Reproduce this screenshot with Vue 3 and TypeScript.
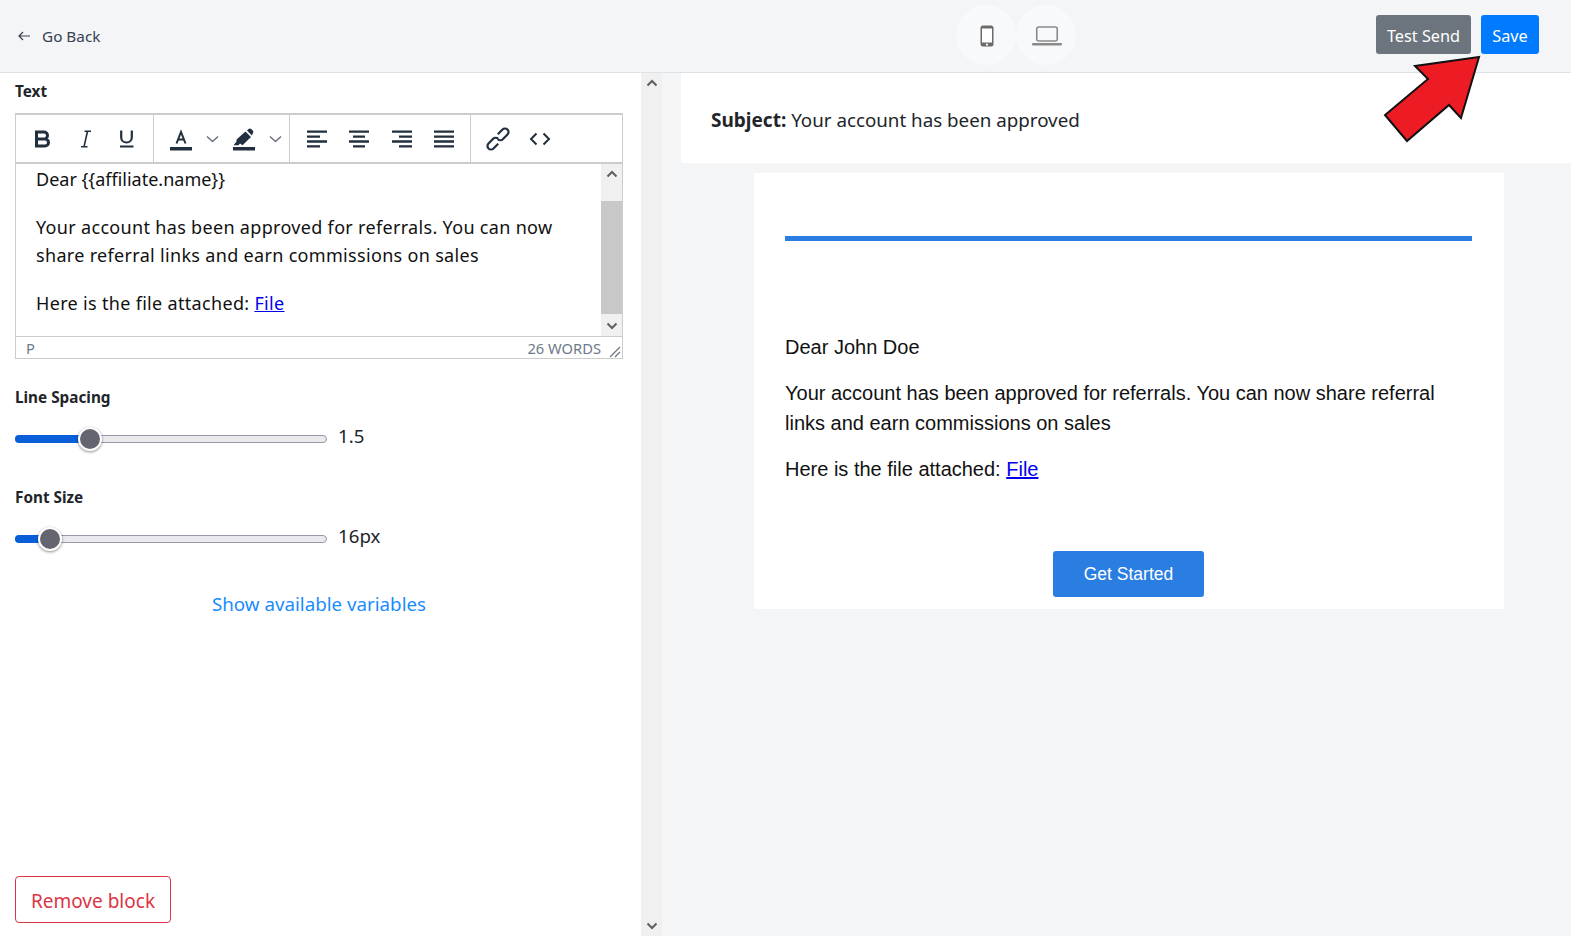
<script setup lang="ts">
const blockLabel = 'Text'
</script>

<template>
  <div class="page">
    <header class="topbar">
      <a class="back">
        <svg class="back-icon" viewBox="0 0 16 16" width="16" height="16"><path d="M14 8H3M7 4 3 8l4 4" fill="none" stroke="#374151" stroke-width="1.2" /></svg>
        <span>Go Back</span>
      </a>
      <div class="devices">
        <button class="device">
          <svg width="14" height="22" viewBox="0 0 14 22"><rect x="0.5" y="0.5" width="13" height="21" rx="2.5" fill="#6b6b6b" /><rect x="2" y="3.5" width="10" height="14" fill="#fff" /><circle cx="7" cy="19.6" r="1.1" fill="#fff" /></svg>
        </button>
        <button class="device">
          <svg width="30" height="20" viewBox="0 0 30 20"><rect x="4.75" y="1" width="20.5" height="14" rx="2" fill="none" stroke="#8a8a8a" stroke-width="1.6" /><rect x="0" y="17" width="30" height="2.6" rx="1" fill="#8a8a8a" /></svg>
        </button>
      </div>
      <div class="actions">
        <button class="btn grey">Test Send</button>
        <button class="btn blue">Save</button>
      </div>
      <svg class="arrow" width="104" height="94" viewBox="0 0 104 94"><path d="M99 5 35 14 48 27 5 63 27 89 69 53 81 66Z" fill="#ed1c24" stroke="#111" stroke-width="2" /></svg>
    </header>

    <div class="body">
      <aside class="panel">
        <div class="panel-inner">
          <div class="label first">{{ blockLabel }}</div>
          <div class="editor">
            <div class="toolbar">
              <div class="group g1">
                <svg class="ti" viewBox="0 0 24 24"><path d="M5.500 5H13a3.500 3.500 0 0 1 0 7H5.500zM5.500 12H14a3.500 3.500 0 0 1 0 7H5.500z" fill="none" stroke="#222f3e" stroke-width="3" /></svg>
                <svg class="ti" viewBox="0 0 24 24"><path d="M11.500 4.300H18M8 19.700h6.500M14.500 4.300 11 19.700" fill="none" stroke="#222f3e" stroke-width="1.600" /></svg>
                <svg class="ti" viewBox="0 0 24 24"><path d="M6.200 3.500v7a5.300 5 0 0 0 10.600 0v-7M5 19.500h13.500" fill="none" stroke="#222f3e" stroke-width="2.200" /></svg>
              </div>
              <div class="group g2">
                <svg class="ti" viewBox="0 0 24 24"><path d="M7.500 16.500 12 5l4.500 11.500M9 12.500h6" fill="none" stroke="#222f3e" stroke-width="2" /><rect x="1" y="20" width="22" height="3.500" fill="#222f3e" /></svg>
                <svg class="chev" viewBox="0 0 13 8"><path d="M1 1.500 6.500 6.500 12 1.500" fill="none" stroke="#6b7280" stroke-width="1.500" /></svg>
                <svg class="ti" viewBox="0 0 24 24"><path d="M1.500 18.200 4.500 14.500V12.500L13.500 4.500 19 10 10.500 18.200 8 16.500 6.500 18.200ZM15 3.500 17 1.800Q18.200 1.200 19.200 2L21 3.800Q21.700 5 21 6L19.800 8.500Z" fill="#222f3e" /><rect x="1" y="20" width="22" height="3.500" fill="#222f3e" /></svg>
                <svg class="chev" viewBox="0 0 13 8"><path d="M1 1.500 6.500 6.500 12 1.500" fill="none" stroke="#6b7280" stroke-width="1.500" /></svg>
              </div>
              <div class="group g3">
                <svg class="ti" viewBox="0 0 24 24"><path d="M2 4.700h20M2 9.600h13M2 14.500h20M2 19.400h13" stroke="#222f3e" stroke-width="2.300" /></svg>
                <svg class="ti" viewBox="0 0 24 24"><path d="M2 4.700h20M6 9.600h12M2 14.500h20M6 19.400h12" stroke="#222f3e" stroke-width="2.300" /></svg>
                <svg class="ti" viewBox="0 0 24 24"><path d="M2 4.700h20M9 9.600h13M2 14.500h20M9 19.400h13" stroke="#222f3e" stroke-width="2.300" /></svg>
                <svg class="ti" viewBox="0 0 24 24"><path d="M2 4.700h20M2 9.600h20M2 14.500h20M2 19.400h20" stroke="#222f3e" stroke-width="2.300" /></svg>
              </div>
              <div class="group g4">
                <svg class="ti" viewBox="0 0 24 24"><g transform="rotate(-45 12 12) scale(1.100) translate(-1.100 -1.100)"><path d="M15 8.800h6a3.200 3.200 0 0 1 0 6.400h-6a3.200 3.200 0 0 1-3.200-3.200M9 15.200H3a3.200 3.200 0 0 1 0-6.400h6a3.200 3.200 0 0 1 3.200 3.200" fill="none" stroke="#222f3e" stroke-width="2" /></g></svg>
                <svg class="ti" viewBox="0 0 24 24"><path d="M8.500 6.500 3 12l5.500 5.500M15.500 6.500 21 12l-5.500 5.500" fill="none" stroke="#222f3e" stroke-width="2" /></svg>
              </div>
            </div>
            <div class="content">
              <div class="text">
                <p class="clip">Dear &#123;&#123;affiliate.name&#125;&#125;</p>
                <p>Your account has been approved for referrals. You can now share referral links and earn commissions on sales</p>
                <p>Here is the file attached: <a class="flink">File</a></p>
              </div>
              <div class="scroll">
                <svg class="sb-arrow" viewBox="0 0 12 8"><path d="M1.500 6.500 6 2l4.500 4.500" fill="none" stroke="#5f5f5f" stroke-width="2" /></svg>
                <div class="thumb"></div>
                <svg class="sb-arrow" viewBox="0 0 12 8"><path d="M1.500 1.500 6 6l4.500-4.500" fill="none" stroke="#5f5f5f" stroke-width="2" /></svg>
              </div>
            </div>
            <div class="status">
              <span>P</span>
              <span class="words">26 WORDS</span>
              <svg class="grip" width="12" height="12" viewBox="0 0 12 12"><path d="M1 11 11 1M6 11l5-5" stroke="#6b7280" stroke-width="1.200" /></svg>
            </div>
          </div>

          <div class="label spacing">Line Spacing</div>
          <div class="slider-row">
            <div class="track"><div class="fill" style="width: 72px"></div><div class="knob" style="left: 62px"></div></div>
            <span class="val">1.5</span>
          </div>
          <div class="label fontsize">Font Size</div>
          <div class="slider-row">
            <div class="track"><div class="fill" style="width: 30px"></div><div class="knob" style="left: 22px"></div></div>
            <span class="val">16px</span>
          </div>
          <a class="vars">Show available variables</a>
          <div class="grow"></div>
          <button class="remove">Remove block</button>
        </div>
      </aside>
      <div class="pane-scroll">
        <svg class="sb-arrow" viewBox="0 0 12 8"><path d="M1.500 6.500 6 2l4.500 4.500" fill="none" stroke="#5f5f5f" stroke-width="2" /></svg>
        <svg class="sb-arrow" viewBox="0 0 12 8"><path d="M1.500 1.500 6 6l4.500-4.500" fill="none" stroke="#5f5f5f" stroke-width="2" /></svg>
      </div>
      <main class="preview">
        <div class="subject"><b>Subject:</b> <span class="subject-text">Your account has been approved</span></div>
        <div class="mail">
          <div class="rule"></div>
          <p>Dear John Doe</p>
          <p>Your account has been approved for referrals. You can now share referral links and earn commissions on sales</p>
          <p>Here is the file attached: <a class="flink">File</a></p>
          <div class="cta"><button>Get Started</button></div>
        </div>
      </main>
    </div>
  </div>
</template>

<style>
html, body { margin: 0; padding: 0; background: #f4f5f7; }
</style>

<style scoped>
.page { width: 1571px; height: 936px; display: flex; flex-direction: column; overflow: hidden; font-family: "Noto Sans", sans-serif; color: #212529; background: #f4f5f7; }
.topbar { position: relative; height: 72px; flex: none; display: flex; align-items: center; padding: 0 32px 0 16px; border-bottom: 1px solid #dee2e6; background: #f4f5f7; }
.back { display: flex; align-items: center; gap: 10px; font-size: 15.300px; color: #374151; width: 940px; }
.devices { display: flex; gap: 0; }
.device { width: 60px; height: 60px; border-radius: 50%; border: 0; background: #f8f9fa; display: flex; align-items: center; justify-content: center; padding: 0; margin-top: -2px; }
.device svg { margin: 1px 0 0 1px; }
.actions { margin-left: auto; display: flex; gap: 10px; margin-top: -3px; }
.btn { height: 39px; border: 0; border-radius: 3px; color: #fff; font: 16.300px "Noto Sans", sans-serif; padding: 2px 0 0; }
.grey { background: #6c757d; width: 95px; }
.blue { background: #007bff; width: 58px; }
.arrow { position: absolute; left: 1380px; top: 52px; z-index: 3; }
.body { flex: 1; display: flex; min-height: 0; }
.panel { width: 641px; flex: none; background: #fff; }
.panel-inner { height: 100%; box-sizing: border-box; padding: 0 18px 13px 15px; display: flex; flex-direction: column; }
.label { font-size: 15.300px; font-weight: 700; color: #212529; line-height: 20px; }
.first { margin-top: 8px; margin-bottom: 12px; }
.spacing { margin-top: 28px; }
.fontsize { margin-top: 34px; }
.editor { border: 2px solid #ccc; border-width: 2px 1px 1px; width: 608px; box-sizing: border-box; }
.toolbar { height: 47px; display: flex; border-bottom: 2px solid #ccc; }
.group { display: flex; align-items: center; border-right: 1px solid #ccc; box-sizing: border-box; }
.g1 { width: 138px; padding-left: 15px; gap: 18px; }
.g2 { width: 136px; padding-left: 15px; }
.g3 { width: 181px; padding-left: 15px; gap: 18.400px; }
.g4 { padding-left: 15px; gap: 18px; border-right: 0; }
.ti { width: 24px; height: 24px; flex: none; }
.chev { width: 13px; height: 8px; margin: 0 13px; flex: none; }
.g2 .chev:last-child { margin-right: 0; }
.content { height: 172px; display: flex; overflow: hidden; border-bottom: 1px solid #ccc; }
.text { flex: 1; padding: 1px 20px 0; font-size: 18px; letter-spacing: .32px; line-height: 28px; color: #111; overflow: hidden; }
.text p { margin: 0 0 20px; }
.text .clip { margin-top: 0; letter-spacing: 0; }
.flink { color: #0000ee; text-decoration: underline; }
.scroll { width: 21px; background: #f0f0f0; display: flex; flex-direction: column; align-items: center; justify-content: space-between; position: relative; padding: 6px 0; box-sizing: border-box; }
.thumb { position: absolute; left: 0; right: 0; top: 37px; height: 113px; background: #c8c8c8; }
.sb-arrow { width: 12px; height: 8px; }
.status { height: 21px; display: flex; align-items: center; padding: 0 9px 0 10px; font-size: 14.700px; color: #6e7a8a; position: relative; }
.words { margin-left: auto; margin-right: 12px; }
.grip { position: absolute; right: 1px; bottom: 0; }
.slider-row { display: flex; align-items: center; margin-top: 18px; height: 28px; gap: 11px; }
.track { position: relative; width: 312px; height: 8px; border-radius: 4px; background: #e9e9ee; border: 1px solid #9a98a8; box-sizing: border-box; }
.fill { position: absolute; left: -1px; top: -1px; height: 8px; border-radius: 4px 0 0 4px; background: #0a5fd8; }
.knob { position: absolute; top: -9px; width: 24px; height: 24px; box-sizing: border-box; border: 2px solid #fff; border-radius: 50%; background: #656572; box-shadow: 0 1px 3px rgba(0,0,0,.45); }
.val { font-size: 18.700px; color: #212529; margin-top: -8px; }
.vars { margin-top: 38px; text-align: center; font-size: 18.750px; color: #1a8cff; line-height: 26px; }
.grow { flex: 1; }
.remove { align-self: flex-start; width: 156px; height: 47px; border: 1px solid #dc3545; border-radius: 4px; background: #fff; color: #dc3545; font: 19px "Noto Sans", sans-serif; padding: 2px 0 0; }
.pane-scroll { width: 21px; flex: none; background: #f0f0f0; display: flex; flex-direction: column; align-items: center; justify-content: space-between; padding: 6px 0; box-sizing: border-box; }
.preview { flex: 1; min-width: 0; padding-left: 19px; background: #f4f5f7; }
.subject { height: 90px; box-sizing: border-box; background: #fff; padding: 34px 0 0 30px; font-size: 19px; line-height: 26px; color: #212529; }
.subject-text { font-size: 18.750px; }
.mail { width: 750px; height: 436px; margin: 10px 0 0 73px; background: #fff; padding: 63px 32px 0 31px; box-sizing: border-box; font-family: "Liberation Sans", sans-serif; font-size: 20px; line-height: 30px; color: #111; }
.mail p { margin: 0 0 16px; }
.rule { height: 5px; background: #2a7de1; margin-bottom: 91px; }
.cta { display: flex; justify-content: center; margin-top: 67px; }
.cta button { width: 151px; height: 46px; border: 0; border-radius: 3px; background: #2a7de1; color: #fff; font: 17.500px "Liberation Sans", sans-serif; }
</style>
